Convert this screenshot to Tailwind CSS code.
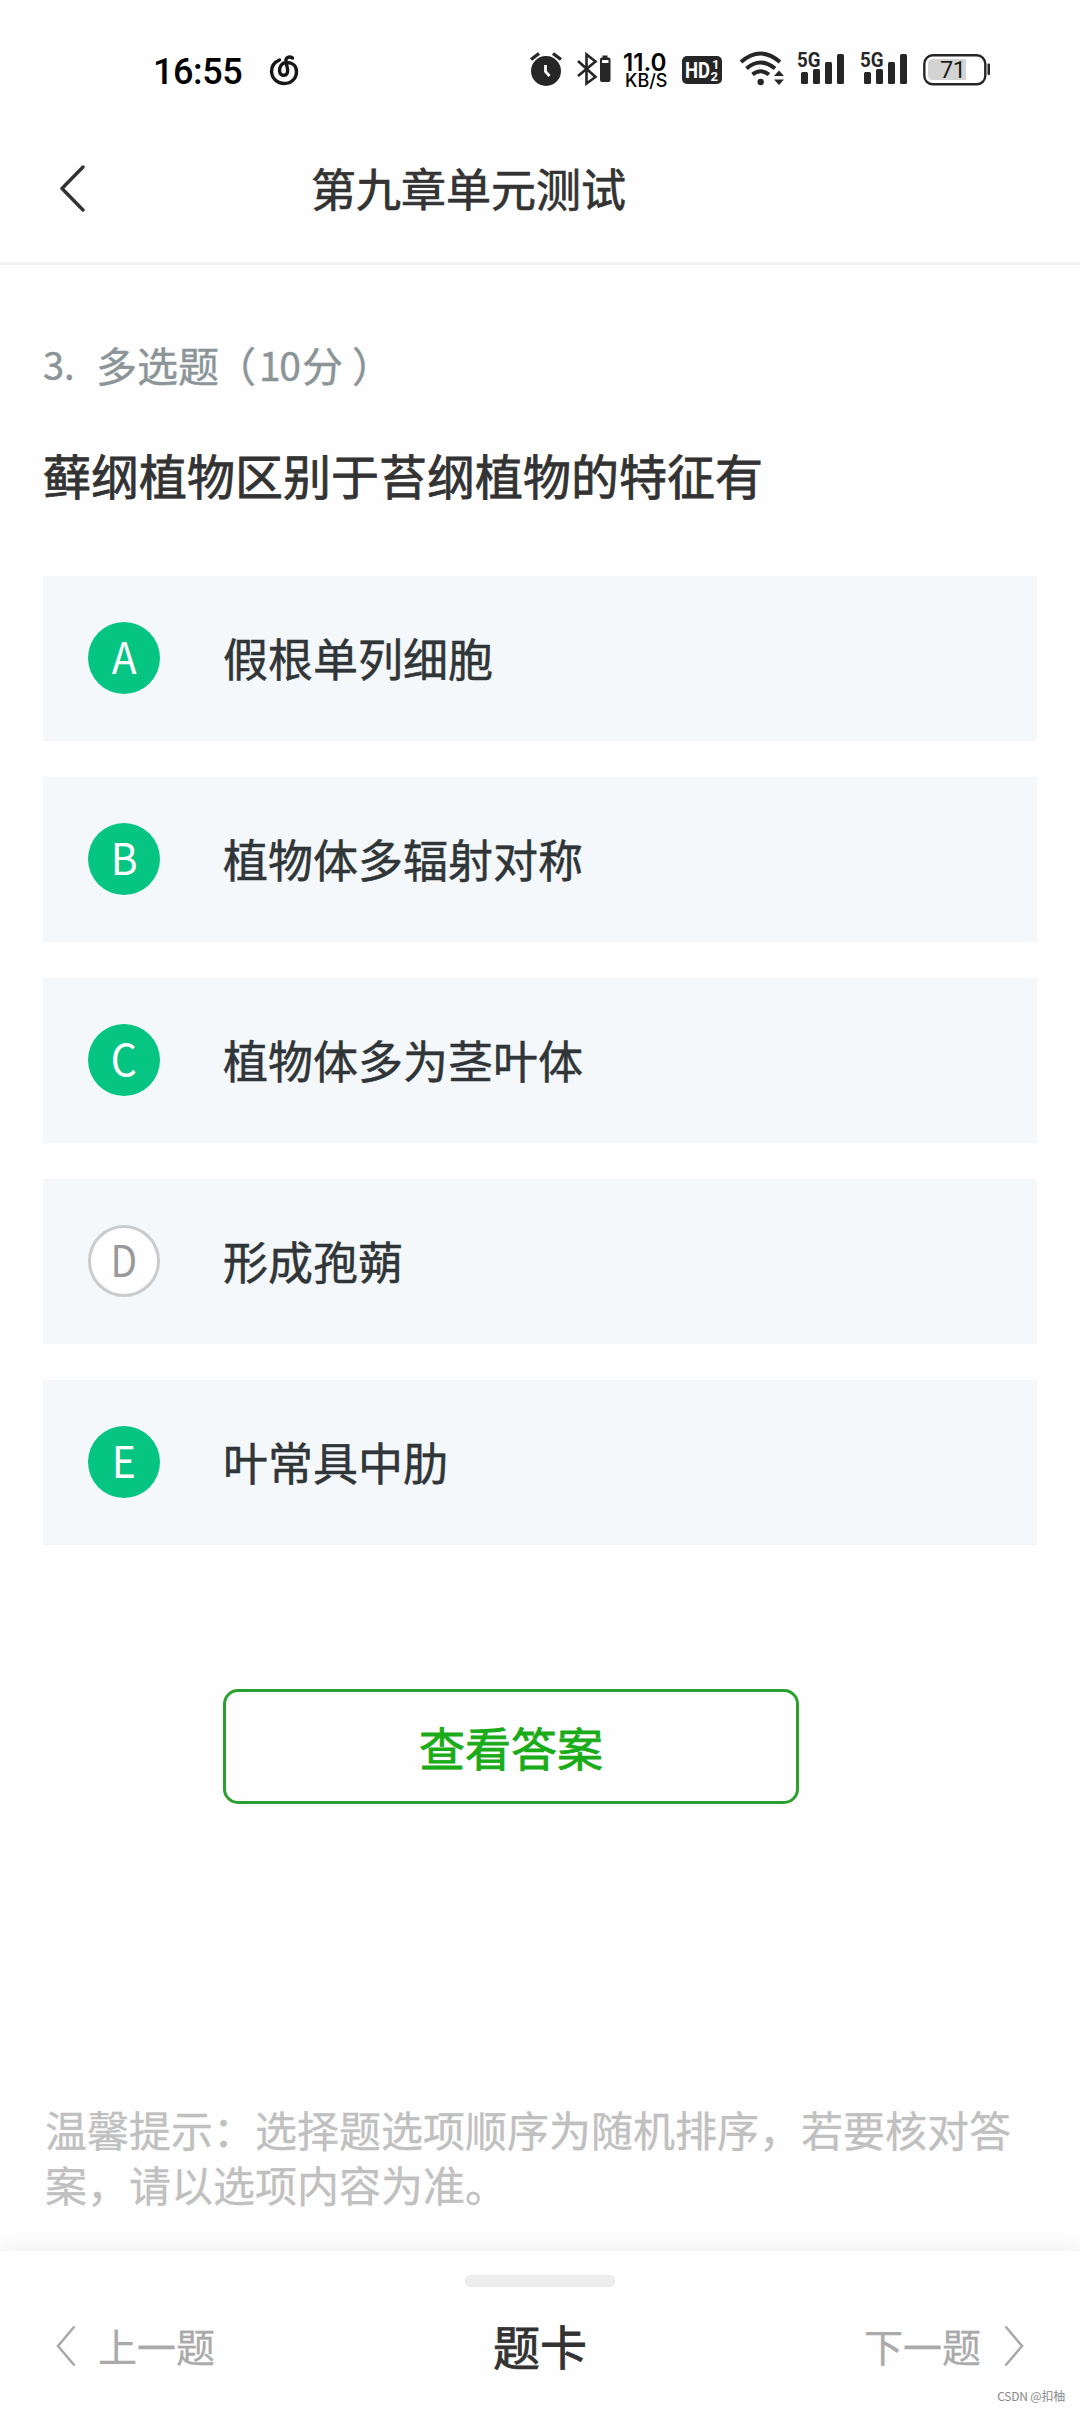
<!DOCTYPE html>
<html lang="zh-CN">
<head>
<meta charset="utf-8">
<title>第九章单元测试</title>
<script src="https://cdn.jsdelivr.net/npm/@tailwindcss/browser@4"></script>
</head>
<body class="bg-white">
<div class="flex h-[2412px] w-[1080px] flex-col overflow-hidden bg-[#fefefe] font-['Noto_Sans_CJK_SC',sans-serif] text-[#333]">

  <!-- status bar -->
  <div class="flex h-[114px] shrink-0 items-start pt-[50px] font-[Roboto,sans-serif] text-[#262626]">
    <div class="ml-[153px] w-[115px] text-[36px] leading-[44px] font-medium tracking-[-0.4px] text-black">16:55</div>
    <svg class="h-9 w-8" viewBox="268 50 32 36" fill="none" stroke="#161616" stroke-width="3.400" stroke-linecap="round">
      <path d="M279.500 60C273.500 62.500 271.500 67 271.500 71.500C272 79 277.500 83.500 284 83.500C291.500 83.500 296.500 78.500 296.500 71.500C296.500 65.500 292 62.500 287 62.500C281.500 62.500 279.300 67 279.500 71C279.700 74 282 75.500 284.300 75.200C287 75 288 72.500 287.600 69.500L286 61.500C285.300 57.500 289 55.800 292.500 58"/>
    </svg>
    <svg class="ml-[228px] h-9 w-9" viewBox="528 50 36 36">
      <circle cx="546" cy="71" r="15" fill="#262626"/>
      <path d="M531 59.500L539 53.500M553 53.500L561 59.500" stroke="#262626" stroke-width="3.400" fill="none"/>
      <path d="M545.500 65V71.500L549.500 76" stroke="#fff" stroke-width="2.800" fill="none"/>
    </svg>
    <svg class="ml-[11px] h-9 w-[38px]" viewBox="575 50 38 36">
      <path d="M578 61L595.500 77L586.500 83.500V54.500L595.500 61.500L578 76" stroke="#262626" stroke-width="2.600" fill="none"/>
      <rect x="600" y="57.500" width="10.500" height="24.500" rx="2" fill="#262626"/>
      <rect x="602.500" y="55.500" width="5" height="3" fill="#262626"/>
      <rect x="602" y="60" width="6.500" height="3" rx=".5" fill="#fff"/>
    </svg>
    <svg class="ml-[9px] h-[42px] w-[46px] overflow-visible font-[Inter,sans-serif]" viewBox="622 50 46 42" fill="#000">
      <text x="623" y="71" font-size="24.500" font-weight="600" textLength="43.500" lengthAdjust="spacingAndGlyphs">11.0</text>
      <text x="625" y="87" font-size="18" font-weight="500" textLength="42.500" lengthAdjust="spacingAndGlyphs">KB/S</text>
    </svg>
    <svg class="ml-3 h-9 w-[42px] font-bold" viewBox="680 50 42 36">
      <rect x="682" y="56" width="40" height="28" rx="5" fill="#262626"/>
      <text x="685" y="78" font-size="22" textLength="25" lengthAdjust="spacingAndGlyphs" fill="#fff">HD</text>
      <text x="712" y="69" font-size="13" fill="#fff">1</text>
      <text x="710.500" y="80.500" font-size="13" fill="#fff">2</text>
    </svg>
    <svg class="ml-4 h-9 w-[48px]" viewBox="738 50 48 36" fill="none" stroke="#262626" stroke-width="4">
      <path d="M741 62Q760.500 45 780 62"/>
      <path d="M746.500 68.500Q760.500 56.500 775 68.500"/>
      <path d="M752.500 74.500Q760.500 68 769 74.500"/>
      <circle cx="760.700" cy="82" r="3.200" fill="#262626" stroke="none"/>
      <path d="M774 76L779 70.500L784 76ZM774 79.500L779 85L784 79.500Z" fill="#262626" stroke="none"/>
    </svg>
    <svg class="ml-2.5 h-9 w-[50px] font-bold" viewBox="796 50 50 36" fill="#262626">
      <text x="797" y="67" font-size="20" textLength="23.500" lengthAdjust="spacingAndGlyphs">5G</text>
      <rect x="801" y="72" width="7" height="12" rx="1.500"/><rect x="813" y="69" width="7" height="15" rx="1.500"/>
      <rect x="825" y="62" width="7" height="22" rx="1.500"/><rect x="837" y="54" width="7" height="30" rx="1.500"/>
    </svg>
    <svg class="ml-[13px] h-9 w-[50px] font-bold" viewBox="796 50 50 36" fill="#262626">
      <text x="797" y="67" font-size="20" textLength="23.500" lengthAdjust="spacingAndGlyphs">5G</text>
      <rect x="801" y="72" width="7" height="12" rx="1.500"/><rect x="813" y="69" width="7" height="15" rx="1.500"/>
      <rect x="825" y="62" width="7" height="22" rx="1.500"/><rect x="837" y="54" width="7" height="30" rx="1.500"/>
    </svg>
    <svg class="ml-3 h-9 w-[72px]" viewBox="921 50 72 36">
      <rect x="924.300" y="55.300" width="61" height="29" rx="8.500" fill="#fff" stroke="#262626" stroke-width="2.400"/>
      <path d="M933 59H966V80H933Q928 80 928 75V64Q928 59 933 59Z" fill="#d3d3d3"/>
      <rect x="987.500" y="63.500" width="2.500" height="11.500" rx="1" fill="#262626"/>
      <text x="940" y="78" font-size="23.500" textLength="26" fill="#1c1c1c">71</text>
    </svg>
  </div>

  <!-- title bar -->
  <header class="flex h-[151px] shrink-0 items-center border-b-3 border-[#f2f2f2]">
    <svg class="ml-[56px] h-12 w-8" viewBox="0 0 32 48" fill="none" stroke="#333" stroke-width="3.400" stroke-linecap="round" stroke-linejoin="round"><path d="M27 3L6 24.500L27 46"/></svg>
    <h1 class="ml-[223px] text-[45px] leading-[60px] [-webkit-text-stroke:0.7px_#333]">第九章单元测试</h1>
  </header>

  <main class="flex flex-col px-[43px]">
    <div class="mt-[69px] flex h-[60px] text-[41px] leading-[60px] text-[#8b9598] [-webkit-text-stroke:0.4px_#8b9598]">
      <span class="w-[53px] text-[38px]">3.</span>
      <span>多选题</span>
      <span class="-ml-1">（</span>
      <span class="ml-[3px] w-[43px] text-[39px] tracking-[-1.5px]">10</span>
      <span>分</span>
      <span class="ml-[9px]">）</span>
    </div>
    <h2 class="mt-[47px] text-[48px] leading-[66px] whitespace-nowrap [-webkit-text-stroke:0.8px_#333]">藓纲植物区别于苔纲植物的特征有</h2>

    <ul class="mt-[69px] flex flex-col gap-9 text-[45px] leading-[60px] text-[#303538]">
      <li class="flex h-[165px] items-center bg-[#f4f8fb] pb-0.5 pl-[45px]"><span class="flex size-[72px] items-center justify-center rounded-full bg-[#06c481] pb-1.5 text-[43px] text-white"><i class="scale-x-95 not-italic">A</i></span><span class="ml-[63px] [-webkit-text-stroke:0.5px_#303538]">假根单列细胞</span></li>
      <li class="flex h-[165px] items-center bg-[#f4f8fb] pb-0.5 pl-[45px]"><span class="flex size-[72px] items-center justify-center rounded-full bg-[#06c481] pb-1.5 text-[43px] text-white"><i class="scale-x-95 not-italic">B</i></span><span class="ml-[63px] [-webkit-text-stroke:0.5px_#303538]">植物体多辐射对称</span></li>
      <li class="flex h-[165px] items-center bg-[#f4f8fb] pb-0.5 pl-[45px]"><span class="flex size-[72px] items-center justify-center rounded-full bg-[#06c481] pb-1.5 text-[43px] text-white"><i class="scale-x-95 not-italic">C</i></span><span class="ml-[63px] [-webkit-text-stroke:0.5px_#303538]">植物体多为茎叶体</span></li>
      <li class="flex h-[165px] items-center bg-[#f4f8fb] pb-0.5 pl-[45px]"><span class="flex size-[72px] items-center justify-center rounded-full border-3 border-[#c9cbcd] bg-[#fefefe] pb-1.5 text-[43px] text-[#999]"><i class="scale-x-90 not-italic">D</i></span><span class="ml-[63px] [-webkit-text-stroke:0.5px_#303538]">形成孢蒴</span></li>
      <li class="flex h-[165px] items-center bg-[#f4f8fb] pb-0.5 pl-[45px]"><span class="flex size-[72px] items-center justify-center rounded-full bg-[#06c481] pb-1.5 text-[43px] text-white"><i class="scale-x-95 not-italic">E</i></span><span class="ml-[63px] [-webkit-text-stroke:0.5px_#303538]">叶常具中肋</span></li>
    </ul>

    <button class="mt-36 ml-[180px] h-[115px] w-[576px] rounded-[15px] border-3 border-[#2ba02e] pb-0.5 text-[46px] leading-[60px] text-[#1aab19] [-webkit-text-stroke:0.8px_#1aab19]">查看答案</button>

    <p class="mt-[297px] ml-0.5 w-[980px] text-[42px] leading-[55px] text-[#c0c0c0] [-webkit-text-stroke:0.3px_#c0c0c0]">温馨提示：选择题选项顺序为随机排序，若要核对答<br>案，请以选项内容为准。</p>
  </main>

  <!-- bottom navigation -->
  <footer class="relative mt-auto flex h-[161px] shrink-0 flex-col items-center bg-[#fefefe] shadow-[0_-2px_20px_rgba(0,0,0,0.07)]">
    <div class="mt-6 h-3 w-[150px] rounded-[5px] bg-[#ededed]"></div>
    <div class="mt-[29px] grid h-[60px] w-full grid-cols-3 items-center pr-[54px] pl-[54px] text-[39px] leading-[60px] text-[#aaa]">
      <div class="flex items-center gap-5">
        <svg class="h-[42px] w-6" viewBox="0 0 24 42" fill="none" stroke="#aaa" stroke-width="2.600"><path d="M20.500 1.500L4 21L20.500 40.500"/></svg>
        <span class="-mt-0.5 [-webkit-text-stroke:0.3px_#aaa]">上一题</span>
      </div>
      <div class="-mt-0.5 text-center text-[47px] text-[#333] [-webkit-text-stroke:0.8px_#333]">题卡</div>
      <div class="flex items-center justify-end gap-[21px]">
        <span class="-mt-0.5 [-webkit-text-stroke:0.3px_#aaa]">下一题</span>
        <svg class="h-[42px] w-6" viewBox="0 0 24 42" fill="none" stroke="#aaa" stroke-width="2.600"><path d="M3.500 1.500L20 21L3.500 40.500"/></svg>
      </div>
    </div>
    <div class="absolute right-[15px] bottom-2 text-[12px] leading-4 tracking-[-0.2px] whitespace-nowrap text-[#888]">CSDN @扣柚</div>
  </footer>
</div>
</body>
</html>
